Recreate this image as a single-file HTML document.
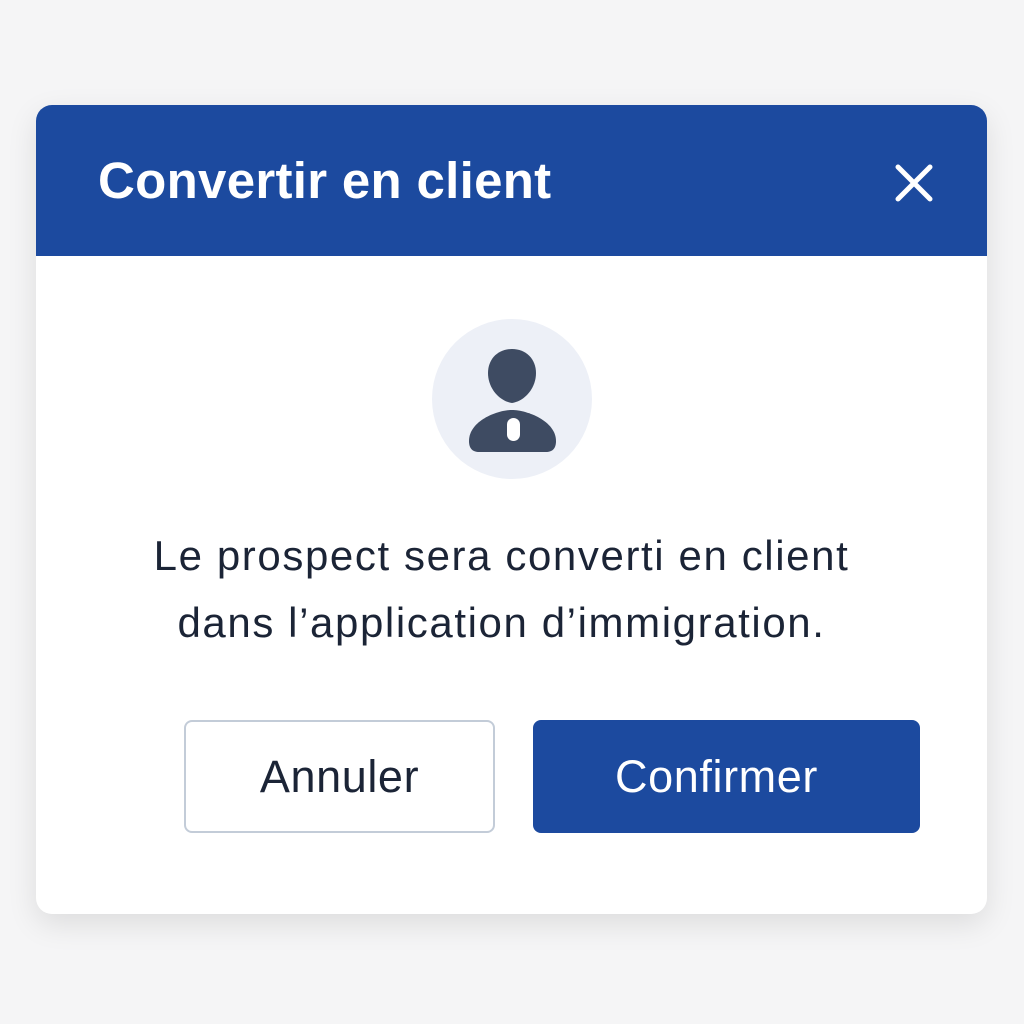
<!DOCTYPE html>
<html><head><meta charset="utf-8"><style>
body{margin:0;width:1024px;height:1024px;background:#f5f5f6;font-family:"Liberation Sans","DejaVu Sans",sans-serif;position:relative;overflow:hidden}
.card{position:absolute;left:36px;top:105px;width:951px;height:809px;background:#fff;border-radius:16px;box-shadow:0 10px 30px rgba(0,0,0,.10);overflow:hidden}
.hd{height:151px;background:#1c4a9f;position:relative}
.hd h1{position:absolute;left:62px;top:48px;margin:0;color:#fff;font-size:51px;font-weight:bold;line-height:56px;letter-spacing:0.3px}
.x{position:absolute;left:858px;top:58px}
.msg{position:absolute;left:-10px;width:951px;top:417px;text-align:center;font-size:42px;line-height:67px;color:#1b2436;letter-spacing:1.6px}
.btn{position:absolute;top:615px;height:113px;border-radius:8px;font-size:45px;display:flex;align-items:center;justify-content:center;box-sizing:border-box;letter-spacing:0.6px}
.b1{left:148px;width:311px;border:2px solid #c3ccd8;color:#1b2436}
.b2{left:497px;width:387px;background:#1c4a9f;color:#fff;padding-right:20px}
</style></head><body>
<div class="card">
<div class="hd"><h1>Convertir en client</h1>
<svg class="x" width="40" height="40" viewBox="0 0 40 40"><path d="M4 4L36 36M36 4L4 36" stroke="#fff" stroke-width="5" stroke-linecap="round"/></svg></div>
<svg style="position:absolute;left:396px;top:214px" width="160" height="160" viewBox="0 0 160 160">
<circle cx="80" cy="80" r="80" fill="#edf0f7"/>
<path d="M80 30c14 0 24 10 24 24c0 15-11 28-24 30c-13-2-24-15-24-30c0-14 10-24 24-24z" fill="#3e4b62"/>
<path d="M37 122c0-20 28-31 43-31s44 11 44 31c0 8-4 11-10 11H47c-6 0-10-3-10-11z" fill="#3e4b62"/>
<rect x="75" y="99" width="13" height="23" rx="6.5" fill="#fff"/>
</svg>
<div class="msg">Le prospect sera converti en client<br>dans l’application d’immigration.</div>
<div class="btn b1">Annuler</div>
<div class="btn b2">Confirmer</div>
</div>
</body></html>
